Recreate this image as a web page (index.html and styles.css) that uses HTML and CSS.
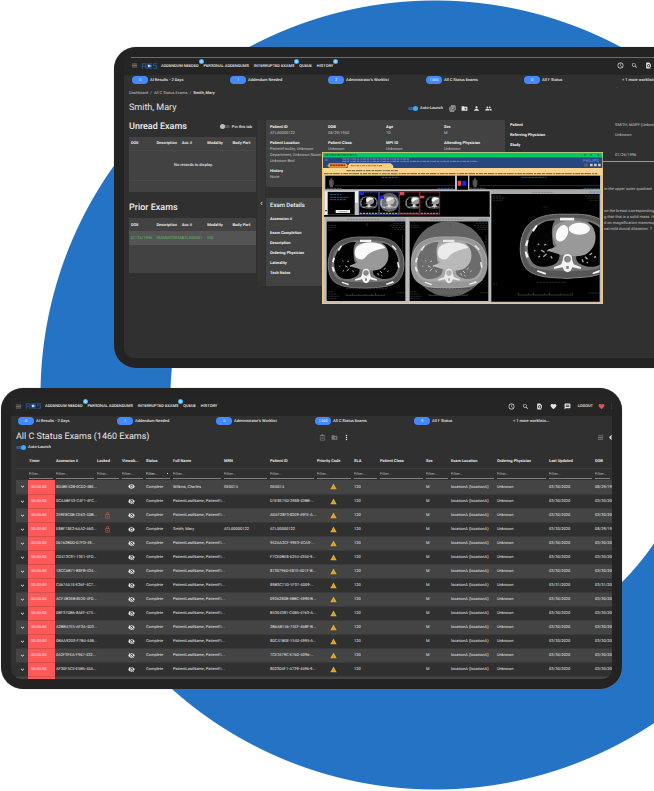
FILE: index.html
```html
<!DOCTYPE html>
<html lang="en">
<head>
<meta charset="utf-8">
<meta name="viewport" content="width=device-width, initial-scale=1">
<title>Radiology worklist</title>
<link rel="stylesheet" href="styles.css">
</head>
<body>
<svg class="defs" aria-hidden="true">
  <symbol id="menu" viewBox="0 0 24 24"><path d="M3 18h18v-2H3v2zm0-5h18v-2H3v2zm0-7v2h18V6H3z"/></symbol>
  <symbol id="search" viewBox="0 0 24 24"><path d="M15.5 14h-.79l-.28-.27C15.41 12.59 16 11.11 16 9.5 16 5.91 13.09 3 9.5 3S3 5.91 3 9.5 5.91 16 9.5 16c1.61 0 3.09-.59 4.23-1.57l.27.28v.79l5 4.99L20.49 19l-4.99-5zm-6 0C7.01 14 5 11.99 5 9.5S7.01 5 9.5 5 14 7.01 14 9.5 11.99 14 9.5 14z"/></symbol>
  <symbol id="clock" viewBox="0 0 24 24"><path d="M12 2a10 10 0 1 0 0 20 10 10 0 0 0 0-20zm0 18a8 8 0 1 1 0-16 8 8 0 0 1 0 16zm.5-13H11v6l5.25 3.15.75-1.23-4.5-2.67z"/></symbol>
  <symbol id="page" viewBox="0 0 24 24"><path d="M20 19.59V8l-6-6H6c-1.1 0-2 .9-2 2v16c0 1.1.9 2 2 2h12c.45 0 .85-.15 1.19-.4l-4.43-4.43A5 5 0 1 1 17 13c0 1.02-.31 1.96-.83 2.75L20 19.59zM9 13a3 3 0 1 0 6 0 3 3 0 0 0-6 0z"/></symbol>
  <symbol id="heart" viewBox="0 0 24 24"><path d="M12 21.35l-1.45-1.32C5.4 15.36 2 12.28 2 8.5 2 5.42 4.42 3 7.5 3c1.74 0 3.41.81 4.5 2.09C13.09 3.81 14.76 3 16.5 3 19.58 3 22 5.42 22 8.5c0 3.78-3.4 6.86-8.55 11.54L12 21.35z"/></symbol>
  <symbol id="chat" viewBox="0 0 24 24"><path d="M20 2H4c-1.1 0-2 .9-2 2v18l4-4h14c1.1 0 2-.9 2-2V4c0-1.1-.9-2-2-2zm-2 12H6v-2h12v2zm0-3H6V9h12v2zm0-3H6V6h12v2z"/></symbol>
  <symbol id="copies" viewBox="0 0 24 24"><path d="M4 6H2v14c0 1.1.9 2 2 2h14v-2H4V6zm16-4H8c-1.1 0-2 .9-2 2v12c0 1.1.9 2 2 2h12c1.1 0 2-.9 2-2V4c0-1.1-.9-2-2-2zm0 14H8V4h12v12zM10 6h8v2h-8zm0 3h8v2h-8zm0 3h5v2h-5z"/></symbol>
  <symbol id="folder" viewBox="0 0 24 24"><path d="M20 6h-8l-2-2H4c-1.1 0-2 .9-2 2v12c0 1.1.9 2 2 2h16c1.1 0 2-.9 2-2V8c0-1.1-.9-2-2-2zm-1 8h-3v3h-2v-3h-3v-2h3V9h2v3h3v2z"/></symbol>
  <symbol id="person" viewBox="0 0 24 24"><path d="M12 12a4 4 0 1 0 0-8 4 4 0 0 0 0 8zm0 2c-2.67 0-8 1.34-8 4v2h16v-2c0-2.66-5.33-4-8-4z"/></symbol>
  <symbol id="people" viewBox="0 0 24 24"><path d="M16 11a3 3 0 1 0 0-6 3 3 0 0 0 0 6zm-8 0a3 3 0 1 0 0-6 3 3 0 0 0 0 6zm0 2c-2.33 0-7 1.17-7 3.5V19h14v-2.500C15 14.170 10.330 13 8 13zm8 0c-.3 0-.6 0-1 .05 1.200.84 2 1.970 2 3.450V19h6v-2.500c0-2.330-4.670-3.500-7-3.500z"/></symbol>
  <symbol id="clip" viewBox="0 0 24 24"><path d="M19 3h-4a3 3 0 0 0-6 0H5a2 2 0 0 0-2 2v15c0 1.100.9 2 2 2h14a2 2 0 0 0 2-2V5a2 2 0 0 0-2-2zm0 17H5V5h2v3h10V5h2v15zM8 11h8v2H8zm0 4h8v2H8z"/></symbol>
  <symbol id="more" viewBox="0 0 24 24"><circle cx="12" cy="5" r="2.500"/><circle cx="12" cy="12" r="2.500"/><circle cx="12" cy="19" r="2.500"/></symbol>
  <symbol id="grid" viewBox="0 0 24 24"><path d="M3 4h18v4H3zm0 6h18v4H3zm0 6h18v4H3z"/></symbol>
  <symbol id="eye" viewBox="0 0 24 24"><path d="M12 4.500C7 4.500 2.730 7.610 1 12c1.730 4.390 6 7.500 11 7.500s9.270-3.110 11-7.500c-1.730-4.390-6-7.500-11-7.500zM12 17a5 5 0 1 1 0-10 5 5 0 0 1 0 10zm0-8a3 3 0 1 0 0 6 3 3 0 0 0 0-6z"/></symbol>
  <symbol id="eye-off" viewBox="0 0 24 24"><path d="M12 4.500C7 4.500 2.730 7.610 1 12c1.730 4.390 6 7.500 11 7.500s9.270-3.110 11-7.500c-1.730-4.390-6-7.500-11-7.500zM12 17a5 5 0 1 1 0-10 5 5 0 0 1 0 10zm0-8a3 3 0 1 0 0 6 3 3 0 0 0 0-6z"/><path d="M5 2l17 17" stroke="#303030" stroke-width="2"/><path d="M3 3l18 18" stroke="currentColor" stroke-width="2"/></symbol>
  <symbol id="lock" viewBox="0 0 24 24"><path d="M18 8h-1V6A5 5 0 0 0 7 6v2H6a2 2 0 0 0-2 2v10c0 1.100.9 2 2 2h12a2 2 0 0 0 2-2V10a2 2 0 0 0-2-2zM9 6a3 3 0 0 1 6 0v2H9V6zm9 14H6V10h12v10zm-6-3a2 2 0 1 0 0-4 2 2 0 0 0 0 4z"/></symbol>
  <symbol id="warn" viewBox="0 0 24 24"><path d="M1 21h22L12 2 1 21z"/><path d="M11 10h2v5h-2zm0 6h2v2h-2z" fill="#b98522"/></symbol>
  <symbol id="down" viewBox="0 0 24 24"><path d="M16.590 8.590L12 13.170 7.410 8.590 6 10l6 6 6-6z"/></symbol>
  <symbol id="left" viewBox="0 0 24 24"><path d="M15.410 7.410L14 6l-6 6 6 6 1.410-1.410L10.830 12z"/></symbol>
  <symbol id="logo" viewBox="0 0 48 18">
    <path d="M1 1h11l2 2v5l-2 1 2 2v6h-3v-6H4v6H1zM4 4v4h7V4zM32 1h-8v3h8zM24 14h8v3h-8zM35 1h12v3H38v3h9v10H35v-3h9v-4h-9z" fill="#1f5596"/>
    <path d="M15 1h15v16H15z" fill="#1c457f"/><path d="M18 8l5-4v3h4v4h-4v3z" fill="#e8f1ff"/><path d="M27 4l4 5-4 5z" fill="#2f80e0"/>
  </symbol>
  <symbol id="chest" viewBox="50 229 236 239" overflow="visible">
    <path class="ct-body" d="M168 276C215 274 255 280 272 315 288 345 285 385 265 408 240 430 200 426 168 430 130 427 95 430 70 408 50 385 50 340 66 312 85 280 125 274 168 276Z"/>
    <path class="ct-wall" d="M168 285C215 284 247 292 263 322 276 350 272 385 254 400 230 415 195 408 168 414 140 408 105 415 80 400 60 380 62 345 74 322 90 292 125 284 168 285Z"/>
    <path class="ct-lung" d="M138 291C104 287 78 316 73 345 70 380 84 404 112 402 140 401 152 386 148 370L133 348C130 325 128 305 138 291Z"/>
    <path class="ct-lung" d="M215 293C250 300 267 330 265 360 262 394 240 406 215 401 193 396 185 386 190 372L225 350C240 330 232 305 215 293Z"/>
    <path class="ct-heart" d="M136 305C150 288 205 286 226 303 242 325 238 358 210 373 188 380 166 376 148 372L118 363 143 352C132 340 130 320 136 305Z"/>
    <path class="ct-bright" d="M135 316C139 298 165 291 190 293 207 293 220 300 226 309 206 312 186 318 172 330 165 339 160 345 149 343 137 340 132 330 135 316Z"/>
    <path class="ct-bone" d="M168 371c8 0 12 7 11 14l4 11 18 7-1 4-20-4-5 9-7 3-7-3-5-9-20 4-1-4 18-7 4-11c-1-7 3-14 11-14Z"/>
    <path class="ct-spine" d="M168 376c7 0 9 5 8 10-3 8-13 8-16 0-1-5 1-10 8-10zm-3 24h6v7h-6z"/>
    <path class="ct-bone" d="M66 350l4-12 5 1-4 14zm3 30l-4-14 5-1 5 14zm28 30l20 7-2 4-21-8zm-14-95l10-14 3 3-9 14zm169 98l-23 7-1-4 21-8zm12-45l-3-16 4-1 4 16zm-16-68l12 13-3 3-12-12zM150 284h34v7h-34z"/>
    <path class="ct-vessel" d="M112 350l5-2M105 362l8 5M118 371l-8 7M127 360l-7 4M128 376l3 6M97 347l3 2M102 376l-4 3M210 378l6 6M221 374l6-5M203 384l3 7M232 380l4-3M88 364l3-1M214 391l3 2" stroke-width="3"/>
  </symbol>
</svg>

<main class="stage">
  <section class="device device-patient" aria-label="Patient view">
    <div class="screen">
      <header class="topbar">
        <button class="icon-btn" aria-label="Menu"><svg class="icon"><use href="#menu"/></svg></button>
        <svg class="logo" role="img" aria-label="Logo"><use href="#logo"/></svg>
        <nav class="nav">
          <a href="#" class="badged">ADDENDUM NEEDED</a><a href="#">PERSONAL ADDENDUMS</a><a href="#" class="badged">INTERRUPTED EXAMS</a><a href="#">QUEUE</a><a href="#" class="badged">HISTORY</a>
        </nav>
        <div class="tools">
          <button class="icon-btn" aria-label="Recent"><svg class="icon"><use href="#clock"/></svg></button>
          <button class="icon-btn" aria-label="Search"><svg class="icon"><use href="#search"/></svg></button>
          <button class="icon-btn" aria-label="Find in page"><svg class="icon"><use href="#page"/></svg></button>
        </div>
      </header>
      <div class="worklists">
        <a href="#"><b>0</b>AI Results - 2 Days</a><a href="#"><b>1</b>Addendum Needed</a><a href="#"><b>2</b>Administrator's Worklist</a><a href="#"><b>1460</b>All C Status Exams</a><a href="#"><b>0</b>All F Status</a><a href="#">+ 1 more worklists...</a>
      </div>
      <div class="crumbs"><a href="#">Dashboard</a> &nbsp;/&nbsp; <a href="#">All C Status Exams</a> &nbsp;/&nbsp; <strong>Smith, Mary</strong></div>
      <div class="title-row">
        <h1>Smith, Mary</h1>
        <div class="actions">
          <label class="toggle"><input type="checkbox" checked>Auto-Launch</label>
          <button class="icon-btn" aria-label="Copy"><svg class="icon"><use href="#copies"/></svg></button>
          <button class="icon-btn" aria-label="Add folder"><svg class="icon"><use href="#folder"/></svg></button>
          <button class="icon-btn" aria-label="Person"><svg class="icon"><use href="#person"/></svg></button>
          <button class="icon-btn" aria-label="People"><svg class="icon"><use href="#people"/></svg></button>
        </div>
      </div>
      <div class="workspace">
        <div class="exam-lists">
          <div class="list-head"><h2>Unread Exams</h2><label class="toggle"><input type="checkbox">Pin this tab</label></div>
          <table class="exams">
            <thead><tr><th>DOE</th><th>Description</th><th>Acc #</th><th>Modality</th><th>Body Part</th></tr></thead>
            <tbody><tr class="empty"><td colspan="5">No records to display.</td></tr><tr class="foot"><td colspan="5"></td></tr></tbody>
          </table>
          <div class="list-head"><h2>Prior Exams</h2></div>
          <table class="exams">
            <thead><tr><th>DOE</th><th>Description</th><th>Acc #</th><th>Modality</th><th>Body Part</th></tr></thead>
            <tbody><tr class="prior"><td>07/26/1996</td><td>MAMMOGRAM</td><td>ATL000001</td><td>MG</td><td></td></tr><tr class="rest"><td colspan="5"></td></tr></tbody>
          </table>
        </div>
        <button class="handle" aria-label="Collapse"><svg class="icon"><use href="#left"/></svg></button>
        <div class="panels">
          <dl class="panel facts">
            <div><dt>Patient ID</dt><dd>ATL00000122</dd></div>
            <div><dt>DOB</dt><dd>08/29/1950</dd></div>
            <div><dt>Age</dt><dd>70</dd></div>
            <div><dt>Sex</dt><dd>M</dd></div>
            <div><dt>Patient Location</dt><dd>PatientFacility, Unknown<br>Department, Unknown Room<br>Unknown Bed</dd></div>
            <div><dt>Patient Class</dt><dd>Unknown</dd></div>
            <div><dt>MPI ID</dt><dd>Unknown</dd></div>
            <div><dt>Attending Physician</dt><dd>Unknown</dd></div>
            <div><dt>History</dt><dd>None</dd></div>
          </dl>
          <div class="panel details">
            <h3>Exam Details</h3>
            <p class="lead">Accession #</p>
            <p>Exam Completion</p><p>Description</p><p>Ordering Physician</p><p>Laterality</p><p>Tech Notes</p>
          </div>
        </div>
        <article class="report">
          <dl>
            <dt>Patient</dt><dd>SMITH, MARY (Unknown)</dd>
            <dt>Referring Physician</dt><dd>Unknown</dd>
            <dt>Study</dt><dd></dd>
            <dt></dt><dd>07/26/1996</dd>
          </dl>
          <hr>
          <p>in the upper outer quadrant</p>
          <p>on the breast corresponding<br>g that this is a solid mass. H<br>d on magnification mammog<br>nal mild ductal dilatation. T</p>
        </article>
        <svg class="viewer" viewBox="36 21 843 456" role="img" aria-label="CT image viewer">
          <path fill="#eac680" d="M36 21h843v456H36z"/>
          <path fill="#00c968" d="M39 23h838v14H39z"/>
          <path d="M45 30h95" stroke="#056b38" stroke-width="4" stroke-dasharray="9 2 5 2"/>
          <path d="M822 30h5M841 30h5M862 30h5" stroke="#056b38" stroke-width="4"/>
          <path fill="#27477f" d="M39 37h838v32H39z"/>
          <path d="M97 42h200M97 49h405M45 45h8" stroke="#7690ba" stroke-width="3" stroke-dasharray="12 2 7 3 4 2"/>
          <text x="818" y="50" class="brand">PHILIPS</text>
          <path d="M52 62l6-7h50l6 7-6 6H58z" fill="#e9a83a"/><path d="M60 61h46" stroke="#a8352a" stroke-width="6" stroke-dasharray="7 1"/>
          <path d="M113 62l6-7h123l8 7v7H113z" fill="#f6d07e"/><path d="M122 62h96" stroke="#a88850" stroke-width="4" stroke-dasharray="9 2 4 2"/>
          <path d="M823 60h10" stroke="#6f604a" stroke-width="9"/><path d="M840 60h8M852 60h8M864 60h8" stroke="#c9c4b8" stroke-width="8"/>
          <path fill="#fad391" d="M39 69h838v21H39z"/>
          <path d="M110 77h154M42 86h820" stroke="#8a744c" stroke-width="4" stroke-dasharray="14 2 9 2 20 3 6 2"/>
          <path fill="#bdbdbd" d="M42 90h831v383H42z"/>
          <path d="M46 92h389v41H46zm395 0h33v42h-33zm37 0h392v41H478zM53 141h81v68H53zm94-2h392v71H147zM42 210h498v5H42z"/>
          <path d="M75 122h360M508 122h362" stroke="#444" stroke-width="2"/>
          <path d="M215 97h50M635 97h74M820 130h48M382 130h50M60 149h34M60 157h56M60 164h50" stroke="#28558c" stroke-width="3" stroke-dasharray="8 2"/>
          <path d="M50 130h45M480 130h46" stroke="#555" stroke-width="3" stroke-dasharray="8 2"/>
          <path d="M61 100h6v6h4v15h-2v6H59v-6h-2v-15h4zM492 100h6v6h4v15h-2v6h-10v-6h-2v-15h4z" fill="#555"/>
          <path fill="#e04a4a" d="M443 107h11v15h-11z"/><path fill="#1a28d8" d="M457 107h12v15h-12z"/>
          <path fill="#eee" d="M77 195h43v9H77zM44 139h8v70h-8zM135 139h9v34h-9z"/><path d="M86 200h26" stroke="#777" stroke-width="2"/><path d="M46 195h4v4h-4z"/>
          <circle cx="238" cy="172" r="29" fill="#5d5d5d"/>
          <use href="#chest" x="148" y="143" width="57" height="57"/><use href="#chest" class="soft" x="209" y="143" width="57" height="57"/>
          <svg x="270" y="141" width="58" height="62"><use href="#chest" x="14" y="2" width="57" height="57"/></svg>
          <svg x="331" y="141" width="57" height="62"><use href="#chest" x="14" y="2" width="57" height="57"/></svg>
          <path d="M147 141h59v68h-59zm61 0h59v68h-59z" fill="none" stroke="#5165b8" stroke-width="2"/><path d="M269 141h59v68h-59zm61 0h59v68h-59z" fill="none" stroke="#a83439" stroke-width="2"/>
          <path fill="#1a28d8" d="M147 141h15v10h-15zm62 11h13v10h-13z"/><path fill="#e04a4a" d="M270 141h13v10h-13zm60 11h13v8h-13z"/>
          <path d="M149 205h56M210 205h56" stroke="#b79a60" stroke-width="4" stroke-dasharray="7 2"/><path d="M271 205h56M332 205h56" stroke="#888" stroke-width="4" stroke-dasharray="7 2"/>
          <path d="M50 229h236v239H50zm249 0h236v239H299zM544 147h325v323H544z"/>
          <path d="M47 217h242v12H47zm249 0h242v12H296zm247-82h328v12H543z" fill="#a8a8a8"/>
          <path d="M110 223h100M360 223h100M665 142h66" stroke="#8a8a8a" stroke-width="3" stroke-dasharray="7 2"/><path d="M255 224h30M503 224h32M838 142h32" stroke="#8295b8" stroke-width="6" stroke-dasharray="8 2"/>
          <use href="#chest" x="50" y="229" width="236" height="239"/>
          <circle cx="418" cy="342" r="114" fill="#626262"/>
          <use href="#chest" class="soft" x="299" y="229" width="236" height="239"/>
          <svg x="544" y="147" width="325" height="323"><use href="#chest" class="plain" x="81" y="2" width="295" height="299"/><ellipse cx="212" cy="118" rx="17" ry="26" transform="rotate(25 212 118)" fill="#fafafa"/><ellipse cx="264" cy="104" rx="32" ry="18" fill="#fafafa"/></svg>
          <path d="M53 241h27M53 247h25M53 255h14M250 235h33M240 241h43M246 247h37M252 253h31M53 440h20M53 447h28M53 454h35M53 461h30M260 443h24M278 270v55M301 241h27M301 247h25M498 235h34M492 241h40M500 247h32M504 253h28M301 440h20M301 447h28M301 454h35M301 461h30M510 443h24M528 270v55M548 153h28M548 159h40M548 166h30M825 153h43M832 159h36M838 166h30M700 186h13M548 417h14M835 444h32M108 431h124M357 431h124M680 412h90" stroke="#3c3c3c" stroke-width="2" stroke-dasharray="7 2"/>
          <path d="M108 451h116M108 447v4M127 444v7M146 447v4M165 447v4M184 447v4M197 444v7M224 447v4M357 451h116M357 447v4M376 444v7M395 447v4M414 447v4M446 444v7M473 447v4M625 450h162M625 442v8M655 445v5M671 442v8M703 445v5M719 442v8M751 445v5M787 442v8M171 234v8M420 234v8" stroke="#505050" stroke-width="2" fill="none"/>
        </svg>
      </div>
    </div>
  </section>

  <section class="device device-worklist" aria-label="Worklist view">
    <div class="screen">
      <header class="topbar">
        <button class="icon-btn" aria-label="Menu"><svg class="icon"><use href="#menu"/></svg></button>
        <svg class="logo" role="img" aria-label="Logo"><use href="#logo"/></svg>
        <nav class="nav">
          <a href="#" class="badged">ADDENDUM NEEDED</a><a href="#">PERSONAL ADDENDUMS</a><a href="#" class="badged">INTERRUPTED EXAMS</a><a href="#">QUEUE</a><a href="#">HISTORY</a>
        </nav>
        <div class="tools">
          <button class="icon-btn" aria-label="Recent"><svg class="icon"><use href="#clock"/></svg></button>
          <button class="icon-btn" aria-label="Search"><svg class="icon"><use href="#search"/></svg></button>
          <button class="icon-btn" aria-label="Find in page"><svg class="icon"><use href="#page"/></svg></button>
          <button class="icon-btn" aria-label="Favorites"><svg class="icon"><use href="#heart"/></svg></button>
          <button class="icon-btn" aria-label="Messages"><svg class="icon"><use href="#chat"/></svg></button>
          <a href="#" class="logout">LOGOUT</a>
          <button class="icon-btn alert" aria-label="Health"><svg class="icon"><use href="#heart"/></svg></button>
          <button class="icon-btn edge" aria-label="More"><svg class="icon"><use href="#more"/></svg></button>
        </div>
      </header>
      <div class="worklists">
        <a href="#"><b>0</b>AI Results - 2 Days</a><a href="#"><b>1</b>Addendum Needed</a><a href="#"><b>5</b>Administrator's Worklist</a><a href="#"><b>1460</b>All C Status Exams</a><a href="#"><b>9</b>All F Status</a><a href="#">+ 1 more worklists...</a>
      </div>
      <div class="title-row">
        <h1>All C Status Exams (1460 Exams)</h1>
        <div class="actions">
          <button class="icon-btn dim" aria-label="Clipboard"><svg class="icon"><use href="#clip"/></svg></button>
          <button class="icon-btn dim" aria-label="Add folder"><svg class="icon"><use href="#folder"/></svg></button>
          <button class="icon-btn" aria-label="More actions"><svg class="icon"><use href="#more"/></svg></button>
        </div>
        <div class="actions view">
          <button class="icon-btn dim" aria-label="Density"><svg class="icon"><use href="#grid"/></svg></button>
          <button class="icon-btn edge" aria-label="Visible columns"><svg class="icon"><use href="#eye"/></svg></button>
        </div>
      </div>
      <label class="toggle launch"><input type="checkbox" checked>Auto-Launch</label>
      <div class="table-wrap">
        <table class="grid">
          <colgroup id="cols"></colgroup>
          <thead><tr id="heads"></tr><tr id="filters" class="filters"></tr></thead>
          <tbody id="rows"></tbody>
        </table>
      </div>
    </div>
  </section>
</main>
<script src="script.js"></script>
</body>
</html>
```
FILE: styles.css
```css
* { box-sizing: border-box; }

:root {
  --bezel: #232323;
  --screen: #303030;
  --panel: #424242;
  --text: #e6e6e6;
  --muted: #c4c4c4;
  --blue: #448aff;
}

body {
  margin: 0;
  background: #fff;
  color: var(--text);
  font: 4px/6px Roboto, "Liberation Sans", sans-serif;
  text-rendering: geometricPrecision;
}

.defs { display: none; }
h1, h2, h3, p, dl, dd { margin: 0; }
a { color: inherit; text-decoration: none; }
button { padding: 0; border: 0; background: none; color: inherit; font: inherit; }

.stage {
  min-height: 791px;
  padding: 47px 0 102px;
  overflow: hidden;
  background: radial-gradient(circle at 435px 395px, #fff 264px, #2573c5 265px, #2573c5 394px, #fff 395px);
}

.device { background: var(--bezel); box-shadow: 0 0 1px #777; }
.device-patient { margin-left: 114px; padding: 10px 0 10px 10px; border-radius: 22px 0 0 22px; }
.device-worklist { margin: 20px 32px 0 1px; padding: 10px; border-radius: 22px; }
.screen { overflow: hidden; background: var(--screen); }
.device-patient .screen { min-height: 301px; border-radius: 0 0 0 10px; }
.device-worklist .screen { border-radius: 0 0 10px 10px; }

.icon { display: block; width: 7px; height: 7px; fill: currentColor; }
.icon-btn { flex: none; color: #e4e4e4; }
.icon-btn.dim { color: #777; }

/* Top bar */
.topbar { display: flex; align-items: center; height: 18px; padding: 0 0 2px 4px; background: #252525; }
.device-patient .topbar { margin-left: 7px; padding: 0; border-top: 1px solid #6b6b6b; box-shadow: -7px 0 #252525; }
.device-patient .topbar > * { margin-bottom: 2px; }
.topbar > .icon-btn { color: #b4b4b4; }
.logo { flex: none; width: 17px; height: 6px; margin-left: 3px; }
.nav { display: flex; flex: none; gap: 5px; margin-left: 3px; font-weight: 500; }
.nav a { position: relative; white-space: nowrap; }
.badged::after { content: ""; position: absolute; top: -4px; right: -5px; width: 5px; height: 5px; border-radius: 50%; background: radial-gradient(#9ed6ff 1px, #3bb0fa 2px); }
.tools { display: flex; flex: none; align-items: center; gap: 7px; margin-left: auto; font-weight: 500; }
.device-patient .tools { margin-right: 2px; }
.alert { color: #e85050; }
.tools .alert { margin-left: -2px; }
.edge { margin-right: -4px; }
.tools .edge { margin-left: -3px; }

/* Worklist shortcuts */
.worklists { display: grid; grid-template-columns: repeat(6, 98px); padding-left: 8px; height: 9px; align-items: center; }
.device-worklist .worklists { grid-template-columns: repeat(6, 1fr); padding-left: 7px; }
.worklists a { display: flex; align-items: center; gap: 2px; white-space: nowrap; font-weight: 500; }
.worklists b { width: 16px; height: 8px; border-radius: 4px; background: var(--blue); color: #e6f0ff; line-height: 8px; text-align: center; font-weight: 400; }

.crumbs { margin: 6px 0 6px 5px; color: var(--muted); white-space: nowrap; }
.crumbs strong { color: #f0f0f0; font-weight: 500; }

.title-row { display: grid; align-items: center; height: 12px; margin-left: 5px; }
.device-patient .title-row { grid-template-columns: 279px 1fr; }
.device-worklist .title-row { grid-template-columns: 303px 1fr auto; margin-top: 6px; }
h1 { color: #e6e6e6; font-size: 9px; line-height: 12px; font-weight: 400; white-space: nowrap; }
.actions { display: flex; align-items: center; gap: 5px; }
.actions .toggle { margin-right: 1px; }

/* Toggle switch */
.toggle { display: flex; align-items: center; gap: 2px; white-space: nowrap; font-weight: 500; }
.toggle input { appearance: none; display: flex; align-items: center; width: 10px; height: 3px; margin: 0; border-radius: 2px; background: #555; }
.toggle input::before { content: ""; width: 5px; height: 5px; flex: none; border-radius: 50%; background: #bdbdbd; }
.toggle input:checked { justify-content: flex-end; background: #2b5f9c; }
.toggle input:checked::before { background: #3ba9f5; }
.launch { margin: 1px 0 4px 5px; }

/* Patient workspace */
.workspace { position: relative; display: grid; grid-template-columns: 127px 7px 239px 1fr; align-items: start; margin: 6px 0 0 5px; }
.handle { align-self: stretch; display: grid; place-items: center; margin: 0 -2px 0 2px; background: #343434; }
.panels { margin: 0 -3px 0 3px; }
.exam-lists { height: 166px; }
.list-head { display: flex; justify-content: space-between; align-items: center; height: 13px; margin-bottom: 4px; }
.list-head .toggle { margin-right: 4px; }
h2 { color: #eee; font-size: 9px; line-height: 12px; font-weight: 500; }
.exams { width: 100%; margin-bottom: 9px; table-layout: fixed; border-collapse: collapse; background: var(--panel); }
.exams th, .exams td { padding: 0 0 0 2px; text-align: left; white-space: nowrap; }
.exams th { height: 13px; font-weight: 700; }
.exams .empty td { height: 30px; border: solid #4a4a4a; border-width: 1px 0; text-align: center; font-weight: 500; }
.exams .foot td { height: 12px; }
.exams .prior td { height: 14px; color: #5cb85c; background: #545454; }
.exams .rest td { height: 28px; }

.panel { background: var(--panel); }
.facts { display: grid; grid-template-columns: repeat(4, 58px); row-gap: 4px; padding: 4px 4px 7px; white-space: nowrap; }
dt { color: #f2f2f2; font-weight: 700; }
dd { color: var(--muted); }
.details { margin-top: 11px; padding: 4px 4px 6px; color: #f2f2f2; font-weight: 700; }
h3 { margin-bottom: 6px; font-size: 6px; line-height: 8px; font-weight: 500; }
.details p { margin-bottom: 4px; }
.details .lead { margin-bottom: 8px; }

.report { min-width: 0; margin-left: 8px; padding-top: 2px; overflow: hidden; white-space: nowrap; }
.report dl { display: grid; grid-template-columns: 105px 1fr; grid-auto-rows: 6px; row-gap: 4px; }
.report hr { margin: 3px 0 24px; border: 0; border-top: 1px solid #999; }
.report p { margin: 0 0 16px 94px; color: var(--muted); }

/* Floating image viewer window */
.viewer { position: absolute; top: 32px; left: 193px; width: 281px; height: 152px; }
.brand { fill: #4f86d8; font-size: 13px; font-weight: 700; }
.ct-body { fill: #555; stroke: #999; stroke-width: 2; }
.ct-wall { fill: #747474; }
.ct-lung { fill: #030303; }
.ct-heart { fill: #999; }
.ct-bright { fill: var(--bright, #fafafa); }
.ct-bone { fill: #f4f4f4; }
.ct-spine { fill: #888; }
.ct-vessel { stroke: #b4b4b4; }
.plain { --bright: #999; }
.soft { filter: contrast(38%) brightness(135%); }

/* Worklist table */
.table-wrap { height: 225px; margin-left: 5px; overflow: hidden; }
.grid { width: 596px; table-layout: fixed; border-collapse: collapse; }
.grid th, .grid td { height: 14px; padding: 0 2px 0 1px; text-align: left; white-space: nowrap; }
.grid th { font-weight: 700; }
.filters th { height: 12px; border-top: 1px solid #3b3b3b; }
.filters input, .filters select { display: block; width: 100%; height: 9px; padding: 0; border: 0; border-bottom: 1px solid #808080; border-radius: 0; background: none; color: #ccc; font: inherit; font-weight: 400; }
.filters ::placeholder { color: #b0b0b0; opacity: 1; }
.filters select { appearance: none; background: linear-gradient(135deg, #ddd 50%, transparent 50%) right 1px center / 2px 2px no-repeat; }
.grid tbody tr { border-bottom: 1px solid #3a3a3a; }
.grid tbody tr:nth-child(odd) { background: #444; }
.grid td:first-child { padding: 0 3px; }
.grid .timer { padding-left: 3px; background: #ff5858; color: #ffe4e4; border-bottom: 1px solid #d94f4f; }
.grid .mid { padding: 0 3px 0 0; text-align: center; }
.grid .mid .icon { margin: 0 auto; color: #e4e4e4; }
.grid .mid .warn { color: #e2a931; }
.grid .mid .lock { color: #c8523c; }
```
FILE: script.js
```js
const columns = [
  ['', 12], ['Timer', 27], ['Accession #', 41], ['Locked', 25], ['Viewab...', 24], ['Status', 27],
  ['Full Name', 51], ['MRN', 46], ['Patient ID', 47], ['Priority Code', 37], ['SLA', 26],
  ['Patient Class', 46], ['Sex', 25], ['Exam Location', 46], ['Ordering Physician', 52],
  ['Last Updated', 46], ['DOB', 18]
];

const generic = 'PatientLastName, PatientFi...';
const exams = [
  ['8D4BE42B-0CD2-4BE...', '', 'eye', 'Wilkins, Charles', 'GE0014', 'GE0014', '03/30/2020', '08/29/1950'],
  ['0CAABF53-C4F1-4FC...', '', 'eye-off', generic, '', 'D1E8E75D-2988-42BB-...', '03/30/2020', '03/30/2000'],
  ['259E8C0B-CE63-4DB...', 'lock', 'eye-off', generic, '', 'A0AF28F3-8209-49FE-A...', '03/30/2020', '03/30/2000'],
  ['E8BF78E2-6AA2-46G...', 'lock', 'eye', 'Smith, Mary', 'ATL00000122', 'ATL00000122', '03/30/2020', '08/29/1950'],
  ['06162BDD-D7FD-49...', '', 'eye-off', generic, '', '952AA2CF-99E3-4CA9-...', '03/30/2020', '03/30/2000'],
  ['CD413C91-13E1-4FD...', '', 'eye-off', generic, '', 'F7CE0BE8-6254-4350-9...', '03/30/2020', '03/30/2000'],
  ['18CC6B71-B8FB-434...', '', 'eye-off', generic, '', '8130796D-E81E-4D1F-B...', '03/30/2020', '03/30/2000'],
  ['C4674A1E-E26F-4C7...', '', 'eye-off', generic, '', '89B3C71D-1F37-4D09-...', '03/31/2020', '03/31/2000'],
  ['ACF4B3EB-8E20-4FD...', '', 'eye-off', generic, '', '0926280B-4BBC-4990-B...', '03/30/2020', '03/30/2000'],
  ['0BF37DB6-8AEF-475...', '', 'eye-off', generic, '', 'B5304381-C0B5-4763-A...', '03/30/2020', '03/30/2000'],
  ['A2BB47E5-AF3A-4D3...', '', 'eye-off', generic, '', '2B6AB146-75EF-46BF-B...', '03/30/2020', '03/30/2000'],
  ['0BAA92D3-F7B4-44B...', '', 'eye-off', generic, '', '8DC41B0E-1540-4995-A...', '03/30/2020', '03/30/2000'],
  ['0A2F3FEA-F967-432...', '', 'eye-off', generic, '', '7CE3479C-E76D-4096-...', '03/30/2020', '03/30/2000'],
  ['AF30F5CE-E5B5-45A...', '', 'eye-off', generic, '', '8023D4F1-A739-4496-9...', '03/30/2020', '03/30/2000'],
  ['', '', '', '', '', '', '', '']
];

const icon = (name) => name ? `<svg class="icon ${name}"><use href="#${name}"/></svg>` : '';

document.getElementById('cols').innerHTML = columns.map(([, w]) => `<col style="width:${w}px">`).join('');

document.getElementById('heads').innerHTML = columns
  .map(([name]) => `<th>${name}</th>`).join('');

document.getElementById('filters').innerHTML = columns.map(([name]) => {
  if (!name) return '<th></th>';
  if (name === 'Status') return '<th><select aria-label="Filter Status"><option>Filter...</option></select></th>';
  return `<th><input type="text" aria-label="Filter ${name}" placeholder="Filter..."></th>`;
}).join('');

document.getElementById('rows').innerHTML = exams.map(([acc, lock, view, name, mrn, pid, updated, dob]) => {
  const on = (value) => acc ? value : '';
  return `<tr><td>${on(icon('down'))}</td><td class="timer">${on('00:00:00')}</td><td>${acc}</td>
    <td class="mid">${icon(lock)}</td><td class="mid">${icon(view)}</td><td>${on('Complete')}</td>
    <td>${name}</td><td>${mrn}</td><td>${pid}</td><td class="mid">${on(icon('warn'))}</td><td>${on('120')}</td>
    <td></td><td>${on('M')}</td><td>${on('locationA (locationA)')}</td><td>${on('Unknown')}</td>
    <td>${updated}</td><td>${dob}</td></tr>`;
}).join('');
```
